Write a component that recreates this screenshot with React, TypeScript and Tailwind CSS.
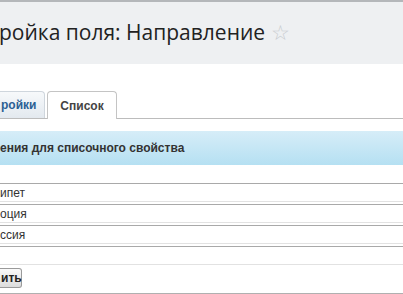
export default function App() {
  const values = ['ипет', 'оция', 'ссия'];
  return (
    <div className="w-[403px] h-[294px] overflow-hidden bg-white" style={{ fontFamily: 'Arial, "Liberation Sans", sans-serif' }}>
      <div className="h-[2px] bg-[#b4b7ba]" />
      <div className="h-[62px] bg-[#eef0f2] flex items-center">
        <h1 className="text-[21px] leading-none text-[#222] -ml-[1px] mt-[-2px] whitespace-nowrap" style={{ fontFamily: '"Open Sans", sans-serif' }}>
          ройка поля: Направление <span className="text-[#c8ccd0] text-[21px]">☆</span>
        </h1>
      </div>

      <div className="mt-[27px] flex items-end border-b border-[#bcbcbc] h-[28px]">
        <div className="h-[27px] w-[45px] rounded-tr-[4px] border border-l-0 border-b-0 border-[#cfd6dd] bg-gradient-to-b from-[#f7f9fb] to-[#e3e9ef] flex items-center pl-[1px] text-[12px] font-bold text-[#2c5f94] whitespace-nowrap">
          ройки
        </div>
        <div className="ml-[2px] h-[28px] w-[70px] rounded-t-[4px] border border-b-0 border-[#c4c4c4] bg-white -mb-px flex items-center justify-center text-[12px] font-bold text-[#444]">
          Список
        </div>
      </div>

      <div className="mt-[12px] h-[34px] bg-gradient-to-b from-[#d6edf8] to-[#b5e0f2] flex items-center text-[12px] font-bold text-[#333] whitespace-nowrap">
        ения для списочного свойства
      </div>

      <div className="mt-[18px] flex flex-col gap-[2px]">
        {values.map((v) => (
          <div key={v} className="h-[19px] border-t border-t-[#a9a9a9] border-b border-b-[#e2e2e2] flex items-center text-[12px] text-[#333]">
            {v}
          </div>
        ))}
        <div className="h-[19px] border-t border-t-[#a9a9a9] border-b border-b-[#e2e2e2]" />
      </div>

      <div className="mt-[3px] flex">
        <button className="h-[20px] pl-[1px] w-[22px] rounded-r-[3px] border border-l-0 border-[#9a9a9a] bg-gradient-to-b from-[#fafafa] to-[#dcdcdc] text-[12px] font-bold text-[#222] flex items-center justify-start">
          ить
        </button>
      </div>
      <div className="mt-[5px] h-[3px] bg-[#b0b0b0]" />
    </div>
  );
}
